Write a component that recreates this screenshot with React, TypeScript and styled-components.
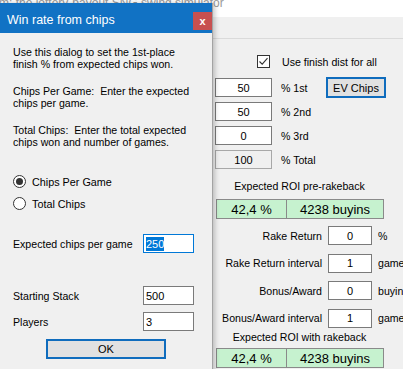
import React from "react";
import styled, { createGlobalStyle } from "styled-components";

const GlobalStyle = createGlobalStyle`
  html, body {
    margin: 0;
    padding: 0;
  }
  body {
    width: 403px;
    height: 369px;
    overflow: hidden;
    background: #f0f0f0;
  }
`;

const FONT = `"Liberation Sans", Arial, sans-serif`;

const Screen = styled.div`
  position: relative;
  width: 403px;
  height: 369px;
  overflow: hidden;
  background: #f0f0f0;
  font-family: ${FONT};
  font-size: 10.6px;
  color: #000;
`;

/* ---------- main window (behind the dialog) ---------- */

const MainTitleBar = styled.div`
  height: 17px;
  background: #fff;
  overflow: hidden;
  white-space: nowrap;
`;

const MainTitle = styled.div`
  margin: -3px 0 0 -1px;
  font-size: 12px;
  line-height: 12px;
  color: #999;
`;

const MenuStrip = styled.div`
  height: 21px;
  background: #f0f0f0;
  border-bottom: 1px solid #dadada;
`;

const Panel = styled.div`
  display: flex;
  flex-direction: column;
  padding-left: 215px;
`;

const CheckRow = styled.div`
  display: flex;
  align-items: center;
  gap: 12px;
  height: 13px;
  margin: 16px 0 0 42px;
  white-space: nowrap;
`;

const CheckBox = styled.span`
  width: 13px;
  height: 13px;
  box-sizing: border-box;
  border: 1px solid #333;
  background: #fff;
  display: flex;
  align-items: center;
  justify-content: center;
`;

const PercentGrid = styled.div`
  display: grid;
  grid-template-columns: 57px 54px 60px;
  grid-auto-rows: 19px;
  row-gap: 5px;
  align-items: center;
  margin-top: 10px;
`;

const UnitLabel = styled.span<{ $pad?: number }>`
  padding-left: ${(p) => p.$pad ?? 9}px;
  white-space: nowrap;
`;

const TextBox = styled.div<{
  $align?: "left" | "center";
  $readOnly?: boolean;
  $focused?: boolean;
}>`
  height: 19px;
  box-sizing: border-box;
  border: 1px solid
    ${(p) => (p.$focused ? "#0078d7" : p.$readOnly ? "#a8a8a8" : "#7a7a7a")};
  background: ${(p) => (p.$readOnly ? "#f0f0f0" : "#fff")};
  display: flex;
  align-items: center;
  justify-content: ${(p) => (p.$align === "left" ? "flex-start" : "center")};
  padding: 0 2px;
  font-size: 11px;
`;

const Selected = styled.span`
  background: #0078d7;
  color: #fff;
  line-height: 14px;
`;

const WinButton = styled.div<{ $width: number; $height: number }>`
  width: ${(p) => p.$width}px;
  height: ${(p) => p.$height}px;
  box-sizing: border-box;
  border: 2px solid #0f6cbd;
  background: #e1e1e1;
  display: flex;
  align-items: center;
  justify-content: center;
  font-size: 11px;
`;

const SectionTitle = styled.div<{ $top: number }>`
  width: 167px;
  margin: ${(p) => p.$top}px 0 0 1px;
  line-height: 13px;
  text-align: center;
  white-space: nowrap;
`;

const GreenPair = styled.div<{ $top: number }>`
  display: grid;
  grid-template-columns: 71px 97px;
  height: 20px;
  margin: ${(p) => p.$top}px 0 0 1px;
`;

const GreenCell = styled.div`
  box-sizing: border-box;
  border: 1px solid #8a8a8a;
  background: #c6f2cf;
  display: flex;
  align-items: center;
  justify-content: center;
  font-size: 13px;
  white-space: nowrap;
  & + & {
    margin-left: -1px;
  }
`;

const RakeGrid = styled.div`
  display: grid;
  grid-template-columns: 107px 44px auto;
  column-gap: 6px;
  grid-auto-rows: 19px;
  row-gap: 8.5px;
  align-items: center;
  margin-top: 7px;
`;

const RakeLabel = styled.span`
  text-align: right;
  white-space: nowrap;
`;

/* ---------- dialog ---------- */

const Dialog = styled.div`
  position: absolute;
  left: 0;
  top: 3px;
  bottom: -10px;
  width: 213px;
  box-sizing: border-box;
  background: #f0f0f0;
  border-right: 1px solid #a3a3a3;
  box-shadow: 2px 0 5px rgba(0, 0, 0, 0.22);
  display: flex;
  flex-direction: column;
`;

const DialogTitleBar = styled.div`
  height: 30px;
  flex-shrink: 0;
  background: #1172c4;
  display: flex;
  align-items: flex-start;
`;

const DialogTitle = styled.div`
  flex: 1;
  padding: 10px 0 0 7px;
  color: #fff;
  font-size: 12.5px;
  line-height: 15px;
  white-space: nowrap;
`;

const CloseButton = styled.div`
  width: 19px;
  height: 18px;
  margin-top: 9px;
  background: #c75050;
  color: #fff;
  font-weight: bold;
  font-size: 11px;
  display: flex;
  align-items: center;
  justify-content: center;
`;

const DialogBody = styled.div`
  display: flex;
  flex-direction: column;
  padding: 13px 0 0 13px;
`;

const Para = styled.p<{ $top?: number }>`
  margin: ${(p) => p.$top ?? 0}px 0 0;
  line-height: 12px;
`;

const RadioRow = styled.div<{ $top: number }>`
  display: flex;
  align-items: center;
  gap: 6px;
  height: 13px;
  margin-top: ${(p) => p.$top}px;
  font-size: 10.8px;
`;

const RadioCircle = styled.span<{ $checked?: boolean }>`
  width: 13px;
  height: 13px;
  box-sizing: border-box;
  border: 1px solid #333;
  border-radius: 50%;
  background: #fff;
  display: flex;
  align-items: center;
  justify-content: center;
  &::after {
    content: "";
    display: ${(p) => (p.$checked ? "block" : "none")};
    width: 7px;
    height: 7px;
    border-radius: 50%;
    background: #333;
  }
`;

const FieldRow = styled.div<{ $top: number }>`
  display: grid;
  grid-template-columns: 130px 51px;
  align-items: center;
  height: 19px;
  margin-top: ${(p) => p.$top}px;
`;

const OkWrap = styled.div`
  margin: 8px 0 0 33px;
`;

const percentRows = [
  { value: "50", label: "% 1st" },
  { value: "50", label: "% 2nd" },
  { value: "0", label: "% 3rd" },
  { value: "100", label: "% Total", readOnly: true },
];

const rakeRows = [
  { label: "Rake Return", value: "0", unit: "%" },
  { label: "Rake Return interval", value: "1", unit: "games" },
  { label: "Bonus/Award", value: "0", unit: "buyins" },
  { label: "Bonus/Award interval", value: "1", unit: "games" },
];

export default function App() {
  return (
    <Screen>
      <GlobalStyle />
      <MainTitleBar>
        <MainTitle>m: the lottery-payout SNG swing simulator</MainTitle>
      </MainTitleBar>
      <MenuStrip />
      <Panel>
        <CheckRow>
          <CheckBox>
            <svg width="11" height="11" viewBox="0 0 11 11">
              <polyline
                points="1.5,5.5 4.2,8.2 9.5,2.2"
                fill="none"
                stroke="#333"
                strokeWidth="1.1"
              />
            </svg>
          </CheckBox>
          <span>Use finish dist for all</span>
        </CheckRow>

        <PercentGrid>
          {percentRows.map((r, i) => (
            <React.Fragment key={r.label}>
              <TextBox $readOnly={r.readOnly}>{r.value}</TextBox>
              <UnitLabel>{r.label}</UnitLabel>
              {i === 0 ? (
                <WinButton $width={60} $height={21}>
                  EV Chips
                </WinButton>
              ) : (
                <span />
              )}
            </React.Fragment>
          ))}
        </PercentGrid>

        <SectionTitle $top={11}>Expected ROI pre-rakeback</SectionTitle>
        <GreenPair $top={6}>
          <GreenCell>42,4 %</GreenCell>
          <GreenCell>4238 buyins</GreenCell>
        </GreenPair>

        <RakeGrid>
          {rakeRows.map((r) => (
            <React.Fragment key={r.label}>
              <RakeLabel>{r.label}</RakeLabel>
              <TextBox>{r.value}</TextBox>
              <UnitLabel $pad={0}>{r.unit}</UnitLabel>
            </React.Fragment>
          ))}
        </RakeGrid>

        <SectionTitle $top={3}>Expected ROI with rakeback</SectionTitle>
        <GreenPair $top={4.5}>
          <GreenCell>42,4 %</GreenCell>
          <GreenCell>4238 buyins</GreenCell>
        </GreenPair>
      </Panel>

      <Dialog>
        <DialogTitleBar>
          <DialogTitle>Win rate from chips</DialogTitle>
          <CloseButton>x</CloseButton>
        </DialogTitleBar>
        <DialogBody>
          <Para>
            Use this dialog to set the 1st-place
            <br />
            finish % from expected chips won.
          </Para>
          <Para $top={14.5}>
            Chips Per Game:&nbsp; Enter the expected
            <br />
            chips per game.
          </Para>
          <Para $top={15}>
            Total Chips:&nbsp; Enter the total expected
            <br />
            chips won and number of games.
          </Para>

          <RadioRow $top={27.5}>
            <RadioCircle $checked />
            <span>Chips Per Game</span>
          </RadioRow>
          <RadioRow $top={9}>
            <RadioCircle />
            <span>Total Chips</span>
          </RadioRow>

          <FieldRow $top={24}>
            <span>Expected chips per game</span>
            <TextBox $align="left" $focused>
              <Selected>250</Selected>
            </TextBox>
          </FieldRow>
          <FieldRow $top={33}>
            <span>Starting Stack</span>
            <TextBox $align="left">500</TextBox>
          </FieldRow>
          <FieldRow $top={7}>
            <span>Players</span>
            <TextBox $align="left">3</TextBox>
          </FieldRow>

          <OkWrap>
            <WinButton $width={120} $height={20}>
              OK
            </WinButton>
          </OkWrap>
        </DialogBody>
      </Dialog>
    </Screen>
  );
}
